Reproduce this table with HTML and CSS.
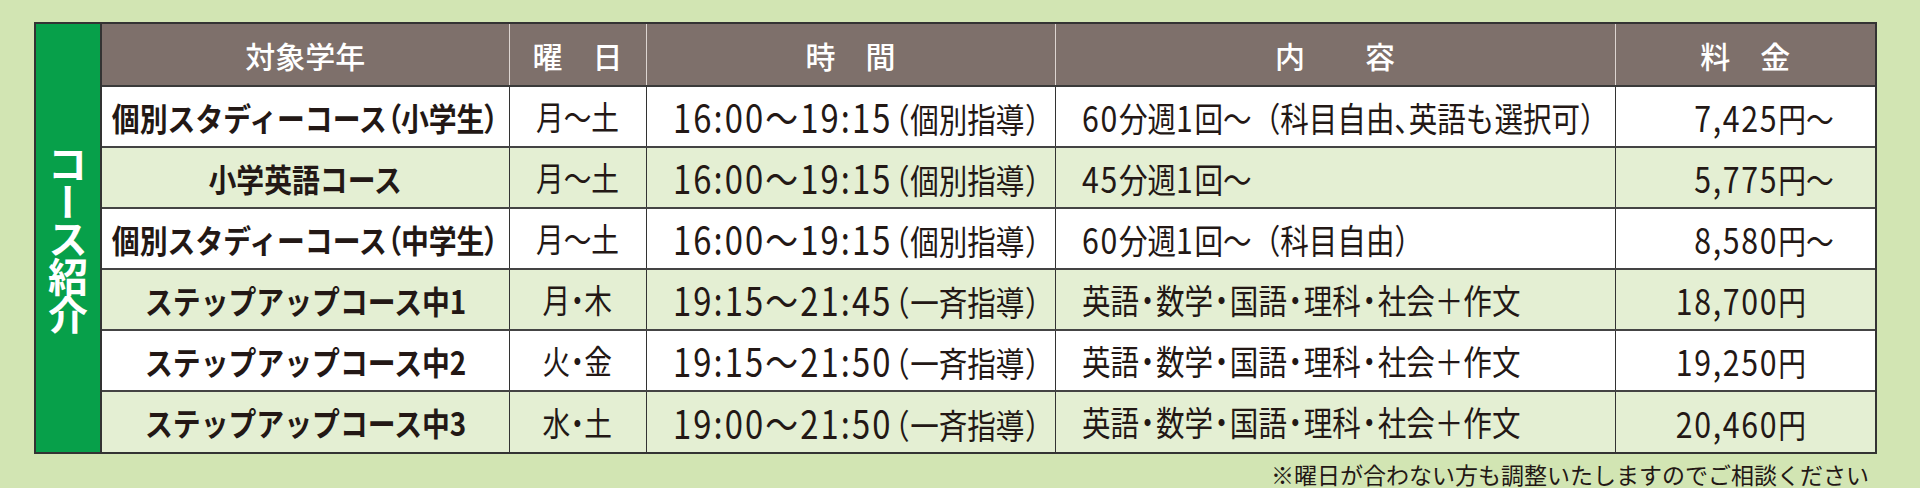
FILE: index.html
```html
<!DOCTYPE html>
<html lang="ja">
<head>
<meta charset="utf-8">
<title>コース紹介</title>
<link rel="stylesheet" href="styles.css">
</head>
<body>
<div class="page">
  <div class="frame">
    <div class="band"><span>コース紹介</span></div>
    <table class="courses">
      <colgroup>
        <col class="c-name"><col class="c-day"><col class="c-time"><col class="c-desc"><col class="c-price">
      </colgroup>
      <thead>
        <tr>
          <th>対象学年</th>
          <th>曜　日</th>
          <th>時　間</th>
          <th>内　　容</th>
          <th>料　金</th>
        </tr>
      </thead>
      <tbody>
        <tr class="odd">
          <td class="name"><div class="c"><span class="t">個別スタディーコース<span class="p">（</span>小学生<span class="p">）</span></span></div></td>
          <td class="day"><div class="c"><span class="t">月〜土</span></div></td>
          <td class="time"><div class="c"><span class="t"><span class="n">16:00〜19:15</span><span class="p">（</span>個別指導<span class="p">）</span></span></div></td>
          <td class="desc"><div class="c"><span class="t"><span class="n">60</span>分週<span class="n">1</span>回〜（科目自由<span class="p">、</span>英語も選択可）</span></div></td>
          <td class="price"><div class="c"><span class="t"><span class="n">7,425</span>円<span class="tilde">〜</span></span></div></td>
        </tr>
        <tr class="even">
          <td class="name"><div class="c"><span class="t">小学英語コース</span></div></td>
          <td class="day"><div class="c"><span class="t">月〜土</span></div></td>
          <td class="time"><div class="c"><span class="t"><span class="n">16:00〜19:15</span><span class="p">（</span>個別指導<span class="p">）</span></span></div></td>
          <td class="desc"><div class="c"><span class="t"><span class="n">45</span>分週<span class="n">1</span>回〜</span></div></td>
          <td class="price"><div class="c"><span class="t"><span class="n">5,775</span>円<span class="tilde">〜</span></span></div></td>
        </tr>
        <tr class="odd">
          <td class="name"><div class="c"><span class="t">個別スタディーコース<span class="p">（</span>中学生<span class="p">）</span></span></div></td>
          <td class="day"><div class="c"><span class="t">月〜土</span></div></td>
          <td class="time"><div class="c"><span class="t"><span class="n">16:00〜19:15</span><span class="p">（</span>個別指導<span class="p">）</span></span></div></td>
          <td class="desc"><div class="c"><span class="t"><span class="n">60</span>分週<span class="n">1</span>回〜（科目自由）</span></div></td>
          <td class="price"><div class="c"><span class="t"><span class="n">8,580</span>円<span class="tilde">〜</span></span></div></td>
        </tr>
        <tr class="even">
          <td class="name"><div class="c"><span class="t">ステップアップコース中<span class="n">1</span></span></div></td>
          <td class="day"><div class="c"><span class="t">月<span class="p">・</span>木</span></div></td>
          <td class="time"><div class="c"><span class="t"><span class="n">19:15〜21:45</span><span class="p">（</span>一斉指導<span class="p">）</span></span></div></td>
          <td class="desc"><div class="c"><span class="t">英語<span class="dot">・</span>数学<span class="dot">・</span>国語<span class="dot">・</span>理科<span class="dot">・</span>社会＋作文</span></div></td>
          <td class="price"><div class="c"><span class="t"><span class="n">18,700</span>円</span></div></td>
        </tr>
        <tr class="odd">
          <td class="name"><div class="c"><span class="t">ステップアップコース中<span class="n">2</span></span></div></td>
          <td class="day"><div class="c"><span class="t">火<span class="p">・</span>金</span></div></td>
          <td class="time"><div class="c"><span class="t"><span class="n">19:15〜21:50</span><span class="p">（</span>一斉指導<span class="p">）</span></span></div></td>
          <td class="desc"><div class="c"><span class="t">英語<span class="dot">・</span>数学<span class="dot">・</span>国語<span class="dot">・</span>理科<span class="dot">・</span>社会＋作文</span></div></td>
          <td class="price"><div class="c"><span class="t"><span class="n">19,250</span>円</span></div></td>
        </tr>
        <tr class="even">
          <td class="name"><div class="c"><span class="t">ステップアップコース中<span class="n">3</span></span></div></td>
          <td class="day"><div class="c"><span class="t">水<span class="p">・</span>土</span></div></td>
          <td class="time"><div class="c"><span class="t"><span class="n">19:00〜21:50</span><span class="p">（</span>一斉指導<span class="p">）</span></span></div></td>
          <td class="desc"><div class="c"><span class="t">英語<span class="dot">・</span>数学<span class="dot">・</span>国語<span class="dot">・</span>理科<span class="dot">・</span>社会＋作文</span></div></td>
          <td class="price"><div class="c"><span class="t"><span class="n">20,460</span>円</span></div></td>
        </tr>
      </tbody>
    </table>
  </div>
  <p class="note">※曜日が合わない方も調整いたしますのでご相談ください</p>
</div>
</body>
</html>
```
FILE: styles.css
```css
html, body {
  margin: 0;
  padding: 0;
}

body {
  background: #d2e5b3;
  font-family: "Noto Sans CJK JP", "Noto Sans", sans-serif;
  color: #231815;
}

.page {
  width: 1843px;
  padding: 22px 0 0 34px;
}

.frame {
  display: flex;
  width: 1843px;
  box-sizing: border-box;
  border: 2px solid #333;
}

.band {
  width: 64px;
  flex: none;
  background: #07a04a;
  border-right: 2px solid #333;
  display: flex;
  align-items: center;
  justify-content: center;
}

.band span {
  writing-mode: vertical-rl;
  text-orientation: upright;
  color: #fff;
  font-size: 40px;
  font-weight: 700;
  letter-spacing: -2.4px;
  line-height: 1;
}

.courses {
  flex: none;
  width: 1773px;
  border-collapse: collapse;
  table-layout: fixed;
}

.c-name { width: 407px; }
.c-day { width: 137px; }
.c-time { width: 409px; }
.c-desc { width: 560px; }
.c-price { width: 260px; }

.courses thead tr { height: 62px; }
.courses tbody tr { height: 61px; }

.courses th {
  background: #7e706b;
  color: #fff;
  font-size: 30px;
  font-weight: 500;
  padding: 0;
  border-left: 1px solid #ddd5d1;
  border-bottom: 2px solid #3a3a3a;
  line-height: 1;
}

.courses th:first-child { border-left: none; }

.courses td {
  padding: 0;
  border-top: 2px solid #444;
  border-left: 1px solid #333;
  overflow: visible;
}

.courses td:first-child { border-left: none; }

.odd { background: #ffffff; }
.even { background: #e4efd3; }

.c {
  display: flex;
  align-items: center;
  width: 100%;
  min-width: 0;
  box-sizing: border-box;
}

.t {
  display: inline-block;
  flex: none;
  white-space: nowrap;
  font-size: 33px;
  line-height: 1;
  transform: scaleX(0.84);
}

.p { font-feature-settings: "palt"; }

.n {
  font-size: 36px;
  letter-spacing: 2px;
}

.dot {
  font-feature-settings: "palt";
  padding: 0 1.5px;
}

.name .c { justify-content: center; }
.name .t {
  font-size: 32px;
  font-weight: 700;
  transform: scaleX(0.87);
  transform-origin: center;
}
.name .n {
  font-size: 1em;
  letter-spacing: 0;
}

.day .c { justify-content: center; }
.day .t { transform-origin: center; }

.time .c,
.desc .c {
  justify-content: flex-start;
  padding-left: 26px;
}
.time .t,
.desc .t {
  font-size: 34px;
  transform-origin: left center;
}

.time .n {
  font-size: 39px;
  letter-spacing: 2.5px;
}

.time .p { padding: 0 2px; }

.price .c {
  justify-content: flex-end;
  padding-right: 69px;
}
.price .t { transform-origin: right center; }

.tilde { margin-right: -33px; }

.note {
  margin: 4px 0 0;
  padding-right: 8px;
  text-align: right;
  font-size: 23px;
  line-height: 32px;
  color: #231815;
}
```
